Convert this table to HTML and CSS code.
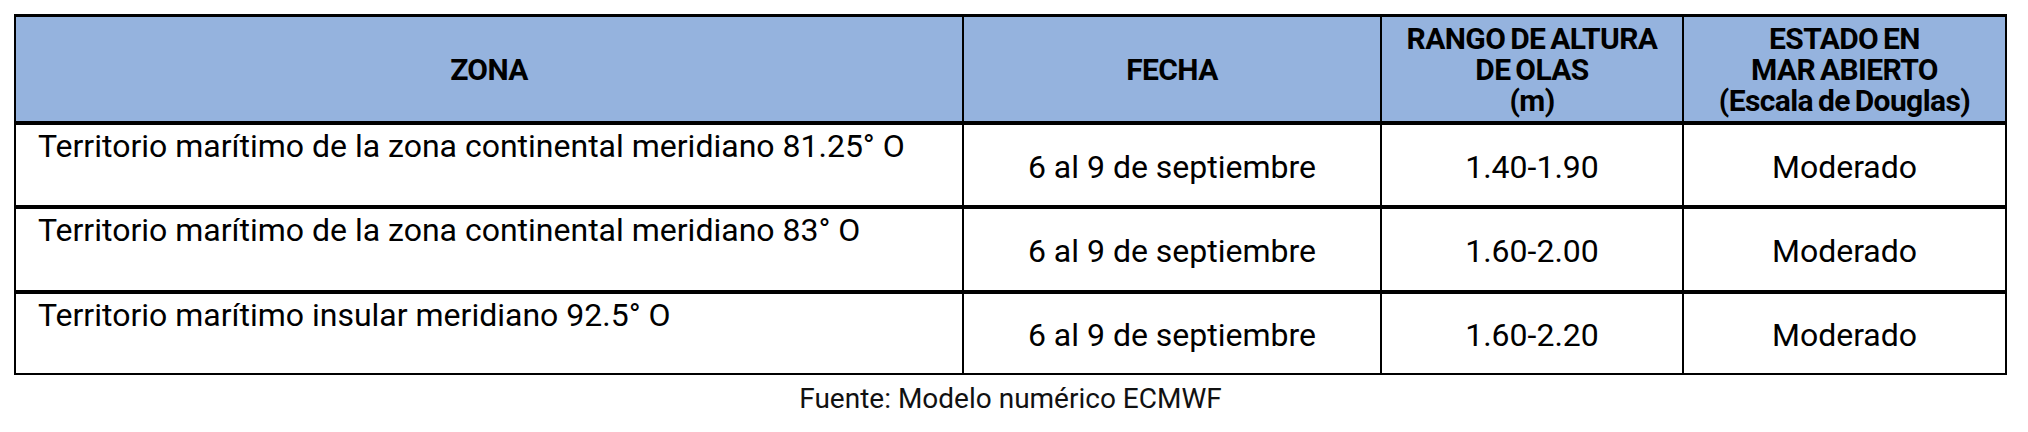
FILE: index.html
```html
<!DOCTYPE html>
<html lang="es">
<head>
<meta charset="utf-8">
<title>Oleaje</title>
<link rel="stylesheet" href="styles.css">
</head>
<body>
<div class="wrap">
  <table class="waves">
    <thead>
      <tr class="hdr">
        <th class="c-zona">ZONA</th>
        <th class="c-fecha">FECHA</th>
        <th class="c-rango">RANGO DE ALTURA<br>DE OLAS<br>(m)</th>
        <th class="c-estado">ESTADO EN<br>MAR ABIERTO<br>(Escala de Douglas)</th>
      </tr>
    </thead>
    <tbody>
      <tr class="r1">
        <td class="zona">Territorio marítimo de la zona continental meridiano 81.25° O</td>
        <td class="val">6 al 9 de septiembre</td>
        <td class="val">1.40-1.90</td>
        <td class="val">Moderado</td>
      </tr>
      <tr class="r2">
        <td class="zona">Territorio marítimo de la zona continental meridiano 83° O</td>
        <td class="val">6 al 9 de septiembre</td>
        <td class="val">1.60-2.00</td>
        <td class="val">Moderado</td>
      </tr>
      <tr class="r3">
        <td class="zona">Territorio marítimo insular meridiano 92.5° O</td>
        <td class="val">6 al 9 de septiembre</td>
        <td class="val">1.60-2.20</td>
        <td class="val">Moderado</td>
      </tr>
    </tbody>
  </table>
  <div class="source">Fuente: Modelo numérico ECMWF</div>
</div>
</body>
</html>
```

FILE: styles.css
```css
html, body {
  margin: 0;
  padding: 0;
  background: #ffffff;
}

body {
  font-family: Roboto, "Liberation Sans", sans-serif;
  color: #000000;
}

.wrap {
  padding: 14px 0 0 14px;
  width: 1993px;
}

.waves {
  width: 1993px;
  table-layout: fixed;
  border-collapse: separate;
  border-spacing: 0;
  border-top: 3px solid #000;
  border-left: 2px solid #000;
  border-right: 2px solid #000;
  border-bottom: 2px solid #000;
}

.waves th,
.waves td {
  box-sizing: border-box;
  padding: 0;
  border-right: 2px solid #000;
}

.waves th:last-child,
.waves td:last-child {
  border-right: none;
}

.hdr th {
  background: #95b3de;
  font-weight: 700;
  font-size: 30px;
  line-height: 31px;
  letter-spacing: -0.6px;
  word-spacing: -2px;
  text-align: center;
  vertical-align: middle;
  border-bottom: 4px solid #000;
  height: 108px;
}

.c-zona { width: 948px; }
.c-fecha { width: 418px; }
.c-rango { width: 302px; }
.c-estado { width: 321px; }

.r1 td, .r2 td {
  border-bottom: 4px solid #000;
}

.r1 td { height: 84px; }
.r2 td { height: 85px; }
.r3 td { height: 79px; }

.zona {
  font-size: 32px;
  line-height: 37px;
  vertical-align: top;
  text-align: left;
  padding: 3px 0 0 22px !important;
}

.val {
  font-size: 32px;
  line-height: 37px;
  text-align: center;
  vertical-align: middle;
  padding-top: 4px !important;
}

.source {
  font-size: 28px;
  line-height: 33px;
  text-align: center;
  padding-top: 7px;
  color: #111;
}
```
